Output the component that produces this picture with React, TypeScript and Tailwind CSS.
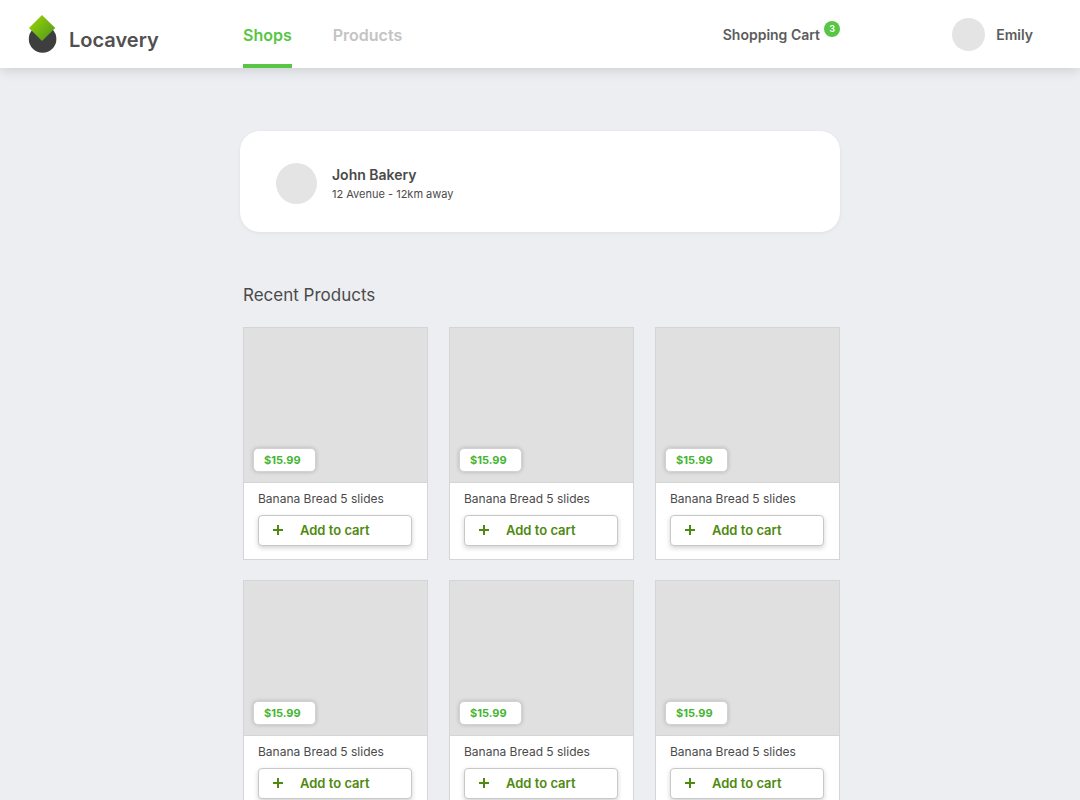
import { useState } from "react";

const products = [
  { id: 1, name: "Banana Bread 5 slides", price: "$15.99" },
  { id: 2, name: "Banana Bread 5 slides", price: "$15.99" },
  { id: 3, name: "Banana Bread 5 slides", price: "$15.99" },
  { id: 4, name: "Banana Bread 5 slides", price: "$15.99" },
  { id: 5, name: "Banana Bread 5 slides", price: "$15.99" },
  { id: 6, name: "Banana Bread 5 slides", price: "$15.99" },
];

type Product = (typeof products)[number];

function Logo() {
  return (
    <a href="#" className="flex items-start pl-7 pt-[15px] text-[#505050]">
      <svg width="30" height="38" viewBox="0 0 30 38" aria-hidden="true">
        <defs>
          <linearGradient id="leaf" x1="0.2" y1="0.2" x2="0.8" y2="0.8">
            <stop offset="0" stopColor="#8fc90a" />
            <stop offset="1" stopColor="#5ba318" />
          </linearGradient>
        </defs>
        <circle cx="14.6" cy="24" r="13.8" fill="#3e3e3e" />
        <path d="M14 0 27.2 13 14 26 1 13Z" fill="url(#leaf)" />
      </svg>
      <span className="ml-[11px] mt-[11px] text-xl leading-7 font-semibold">Locavery</span>
    </a>
  );
}

function Header({ cartCount }: { cartCount: number }) {
  return (
    <header className="relative grid h-[68px] grid-cols-[1fr_minmax(0,600px)_1fr] bg-white shadow-[0_2px_12px_rgba(0,0,0,0.14)]">
      <Logo />
      <div className="flex justify-between pl-[3px]">
        <nav className="flex gap-[41px] text-base font-semibold">
          <a href="#" className="flex items-center border-y-4 border-t-transparent border-b-[#58c644] pt-[2px] text-[#58c644]">
            Shops
          </a>
          <a href="#" className="flex items-center border-y-4 border-transparent pt-[2px] text-[#c4c4c4]">
            Products
          </a>
        </nav>
        <a href="#" className="flex items-center gap-1 text-sm font-semibold text-[#5c5c5c]">
          <span className="pt-[2px]">Shopping Cart</span>
          <span className="mb-[10px] flex size-4 items-center justify-center rounded-full bg-[#58c644] text-[9px] text-white">
            {cartCount}
          </span>
        </a>
      </div>
      <a href="#" className="flex items-center justify-end gap-[11px] pr-[47px] text-sm font-semibold text-[#5c5c5c]">
        <span className="size-[33px] rounded-full bg-[#e4e4e4]" />
        <span className="pt-[2px]">Emily</span>
      </a>
    </header>
  );
}

function ProductCard({ product, onAdd }: { product: Product; onAdd: () => void }) {
  return (
    <li className="border border-[#d4d6d6] bg-white">
      <div className="flex h-[155px] items-end border-b border-[#d4d6d6] bg-[#e0e0e0] px-[9px] pb-[10px]">
        <span className="h-6 w-[63px] rounded-[5px] border border-[#d2d2d2] bg-white pl-[10px] text-[11px] leading-[22px] font-bold text-[#45b531] shadow-[0_0_4px_rgba(0,0,0,0.2)]">
          {product.price}
        </span>
      </div>
      <div className="pt-[6px] pr-[15px] pb-[13px] pl-[14px]">
        <h3 className="text-xs leading-5 text-[#4a4a4a]">{product.name}</h3>
        <button
          type="button"
          onClick={onAdd}
          className="mt-[6px] flex h-[31px] w-full items-center rounded-[4px] border border-[#c8c8c8] bg-white pb-px pl-[14px] text-[13px] font-semibold text-[#4f8a10] shadow-[0_2px_5px_rgba(0,0,0,0.18)]"
        >
          <svg width="10" height="10" viewBox="0 0 10 10" fill="currentColor" aria-hidden="true">
            <path d="M4 0h2v4h4v2H6v4H4V6H0V4h4Z" />
          </svg>
          <span className="ml-[17px] pt-px">Add to cart</span>
        </button>
      </div>
    </li>
  );
}

export default function App() {
  const [cartCount, setCartCount] = useState(3);

  return (
    <div className="h-screen overflow-y-auto bg-[#edeef2] font-['Inter',sans-serif] [scrollbar-width:none]">
      <Header cartCount={cartCount} />
      <main className="mx-auto max-w-[600px] pt-[63px] pb-16">
        <section className="flex items-center gap-[15px] rounded-[20px] bg-white px-9 pt-[30px] pb-[26px] shadow-[0_1px_4px_rgba(0,0,0,0.06)]">
          <div className="my-[2px] size-[41px] rounded-full bg-[#e4e4e4]" />
          <div className="text-[#4a4a4a]">
            <h1 className="text-sm leading-5 font-semibold">John Bakery</h1>
            <p className="text-[11px] leading-[18px]">12 Avenue - 12km away</p>
          </div>
        </section>
        <section className="pl-[3px]">
          <h2 className="mt-[51px] mb-[19px] text-[17px] leading-[25px] text-[#4a4a4a]">Recent Products</h2>
          <ul className="grid grid-cols-3 gap-x-[21px] gap-y-5">
            {products.map((product) => (
              <ProductCard key={product.id} product={product} onAdd={() => setCartCount(cartCount + 1)} />
            ))}
          </ul>
        </section>
      </main>
    </div>
  );
}
